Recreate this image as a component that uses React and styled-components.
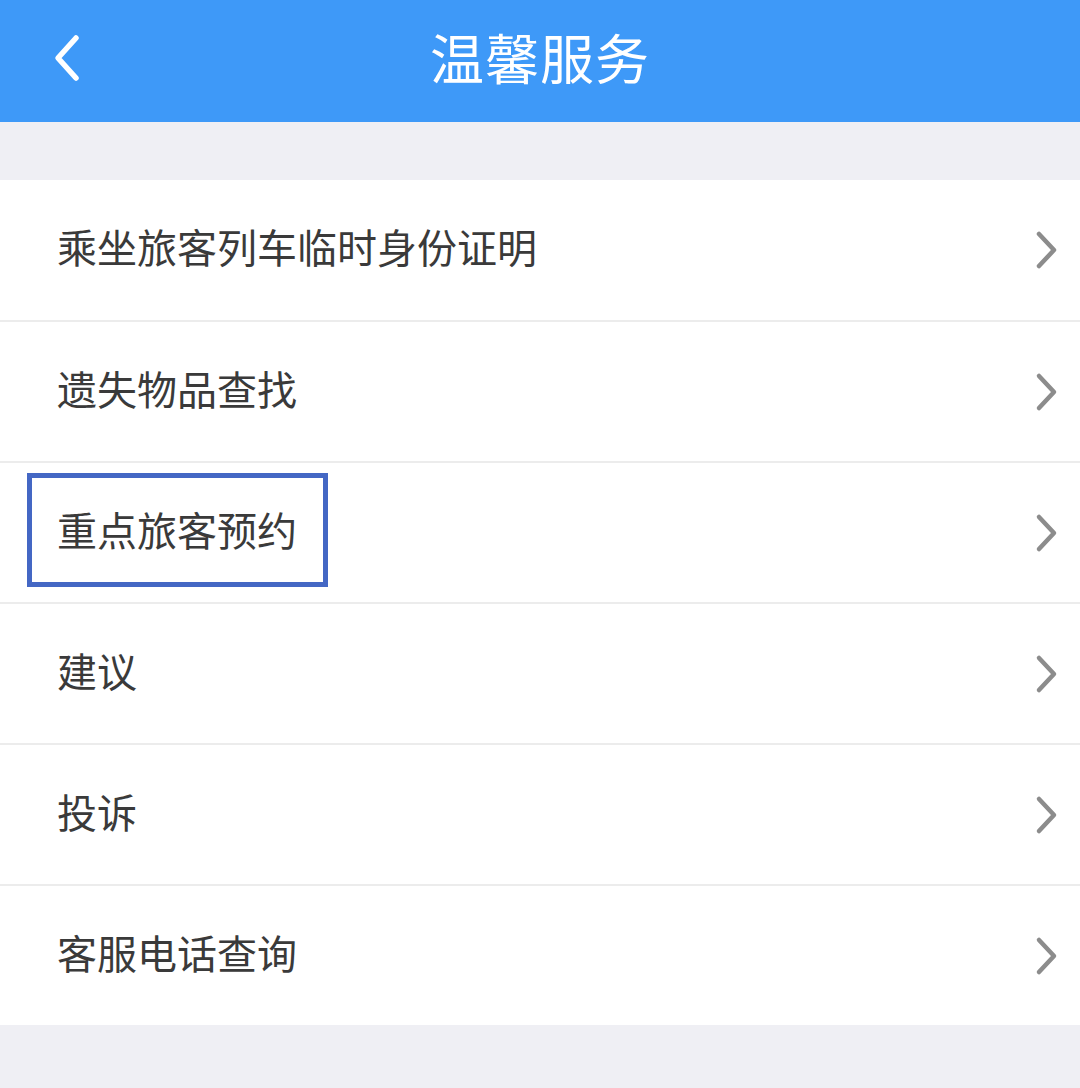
import React from 'react';
import styled, { createGlobalStyle } from 'styled-components';

const GlobalStyle = createGlobalStyle`
  html, body {
    margin: 0;
    padding: 0;
    background: #efeff4;
  }
  body {
    font-family: "Noto Sans CJK SC", "Noto Sans", sans-serif;
  }
`;

const Page = styled.div`
  width: 1080px;
  min-height: 1088px;
  background: #efeff4;
`;

const Header = styled.header`
  position: relative;
  height: 122px;
  background: #3e99f8;
  display: flex;
  align-items: center;
  justify-content: center;
`;

const BackButton = styled.button`
  position: absolute;
  left: 40px;
  top: 28px;
  width: 54px;
  height: 60px;
  border: none;
  background: none;
  padding: 0;
  display: flex;
  align-items: center;
  justify-content: center;
`;

const Title = styled.h1`
  margin: 0 0 10px;
  color: #ffffff;
  font-size: 54px;
  font-weight: 400;
  letter-spacing: 1px;
`;

const List = styled.ul`
  list-style: none;
  margin: 58px 0 0;
  padding: 0;
  background: #ffffff;
`;

const Row = styled.li`
  position: relative;
  height: ${(p) => (p.$first ? '140px' : '139px')};
  display: flex;
  align-items: center;
  justify-content: space-between;
  padding: 0 20px 0 57px;
  border-top: ${(p) => (p.$first ? 'none' : '2px solid #ececec')};
`;

const Label = styled.span`
  color: #3a3a3a;
  font-size: 40px;
  line-height: 1;
  margin-bottom: 8px;
`;

const Highlight = styled.div`
  position: absolute;
  left: 27px;
  top: 10px;
  width: 301px;
  height: 114px;
  border: 5px solid #4467c4;
  box-sizing: border-box;
  pointer-events: none;
`;

const Chevron = () => (
  <svg width="26" height="40" viewBox="0 0 26 40">
    <path d="M5 4 L20 20 L5 36" fill="none" stroke="#8c8c8c" strokeWidth="4.5" strokeLinecap="round" strokeLinejoin="round" />
  </svg>
);

const BackIcon = () => (
  <svg width="34" height="48" viewBox="0 0 34 48">
    <path d="M26 4 L8 24 L26 44" fill="none" stroke="#ffffff" strokeWidth="5.5" strokeLinecap="round" strokeLinejoin="round" />
  </svg>
);

const items = [
  { label: '乘坐旅客列车临时身份证明' },
  { label: '遗失物品查找' },
  { label: '重点旅客预约', marked: true },
  { label: '建议' },
  { label: '投诉' },
  { label: '客服电话查询' },
];

export default function App() {
  return (
    <Page>
      <GlobalStyle />
      <Header>
        <BackButton aria-label="返回">
          <BackIcon />
        </BackButton>
        <Title>温馨服务</Title>
      </Header>
      <List>
        {items.map((item, i) => (
          <Row key={item.label} $first={i === 0}>
            <Label>{item.label}</Label>
            <Chevron />
            {item.marked && <Highlight />}
          </Row>
        ))}
      </List>
    </Page>
  );
}
